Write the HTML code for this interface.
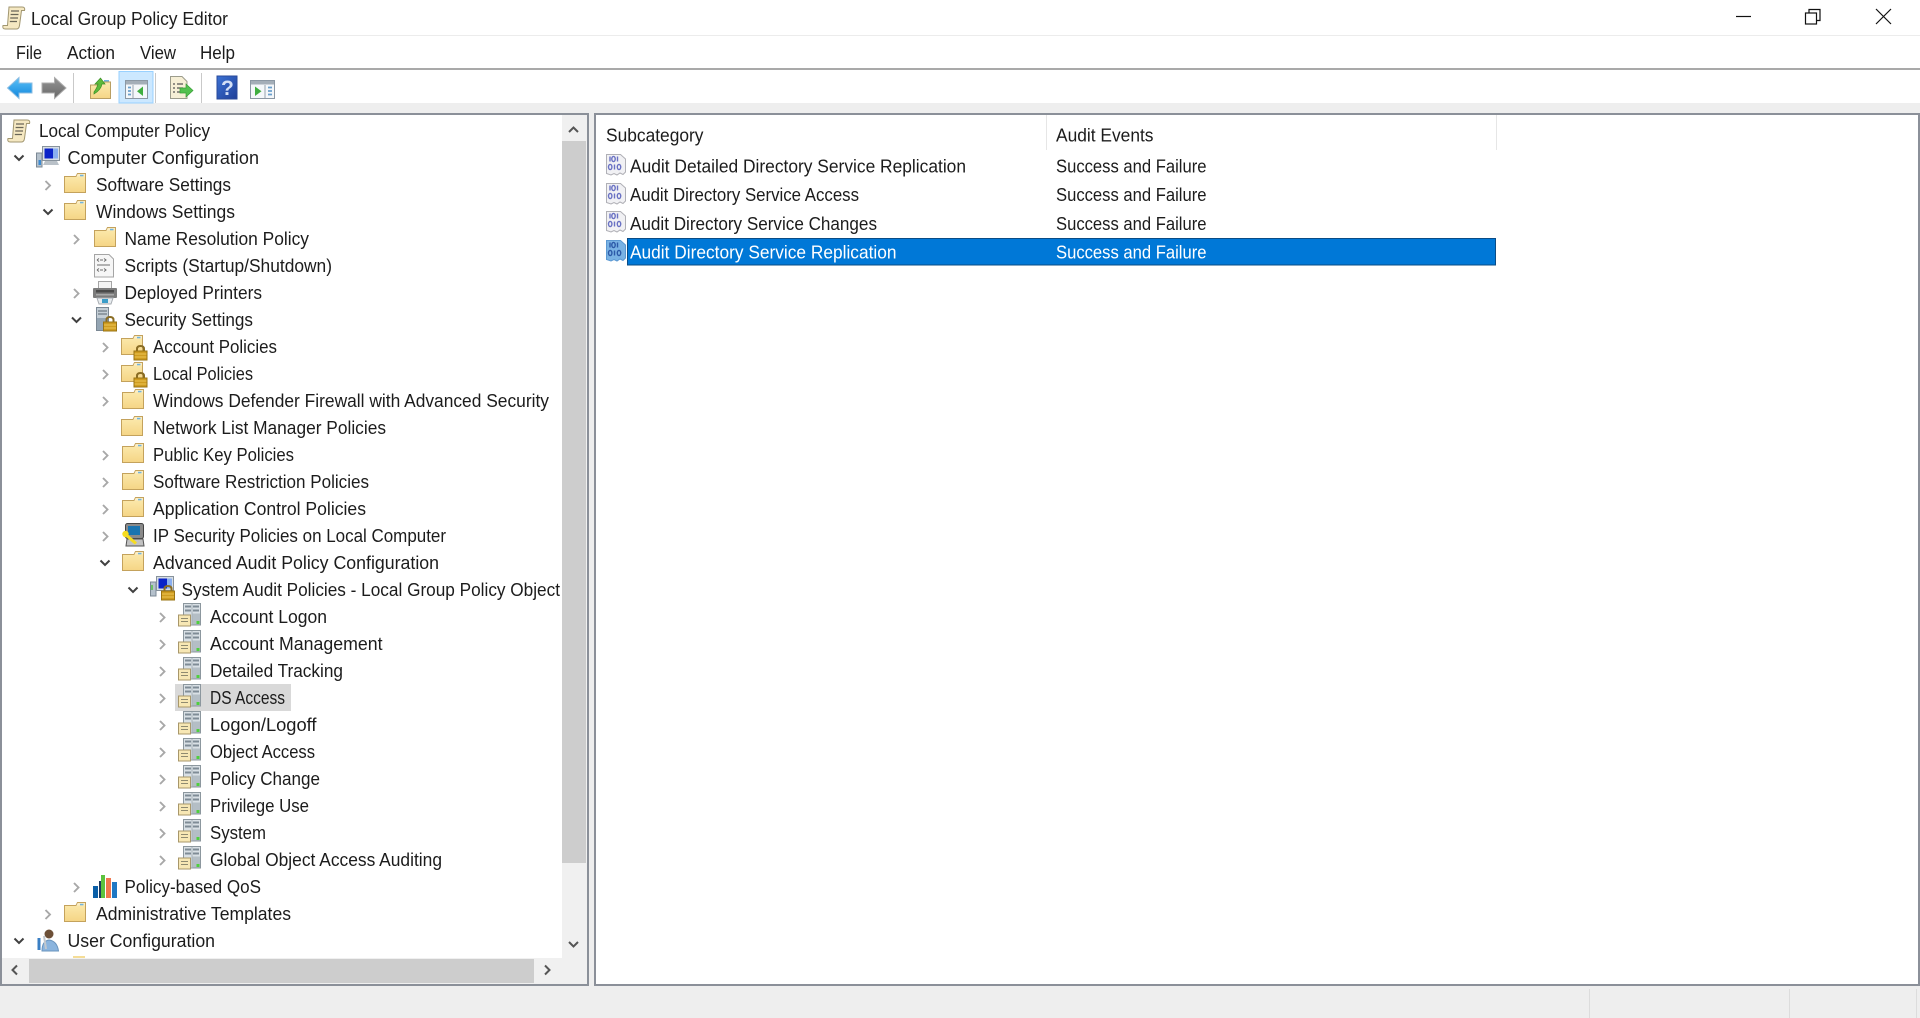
<!DOCTYPE html>
<html lang="en"><head><meta charset="utf-8"><title>Local Group Policy Editor</title>
<style>
html,body{margin:0;padding:0;background:#fff;width:1920px;height:1018px;overflow:hidden}
svg{display:block}
text{font-family:"Liberation Sans",sans-serif;font-size:18px;fill:#1c1c1c}
.soft{filter:blur(.35px)}
</style></head><body>
<svg xmlns="http://www.w3.org/2000/svg" width="1920" height="1018" viewBox="0 0 1920 1018">
<defs>
<linearGradient id="fg" x1="0" y1="0" x2="0" y2="1"><stop offset="0" stop-color="#fcebb0"/><stop offset="1" stop-color="#f5d585"/></linearGradient>
<linearGradient id="bl" x1="0" y1="0" x2="0" y2="1"><stop offset="0" stop-color="#5cc2f7"/><stop offset="1" stop-color="#0f84dc"/></linearGradient>
<linearGradient id="gr" x1="0" y1="0" x2="0" y2="1"><stop offset="0" stop-color="#959595"/><stop offset="1" stop-color="#686868"/></linearGradient>
<linearGradient id="hp" x1="0" y1="0" x2="1" y2="1"><stop offset="0" stop-color="#3c72d4"/><stop offset="1" stop-color="#1f3f98"/></linearGradient>
<symbol id="folder" width="24" height="22" viewBox="0 0 24 22" overflow="visible">
<path d="M.5 3.500H12L13.500 .5H21.500V19.500H.5Z" fill="url(#fg)" stroke="#c4a25c"/>
<path d="M13.700 1H21V3.500H12.500Z" fill="#fbeec6"/><rect x="16" y="1.800" width="3.500" height="1.500" fill="#6fb4e0"/>
</symbol>
<symbol id="lock" width="15" height="15" viewBox="0 0 15 15" overflow="visible">
<path d="M3.500 6V3.500Q3.500 .5 7 .5T10.500 3.500V6" fill="none" stroke="#8a6d24" stroke-width="2"/>
<rect x=".5" y="5.500" width="13" height="9" fill="#cf9c20" stroke="#9a7414"/><path d="M1 8.500H13M1 11.500H13" stroke="#edc655"/>
</symbol>
<symbol id="server" width="24" height="24" viewBox="0 0 24 24" overflow="visible">
<rect x="5.500" y=".5" width="17" height="21.500" fill="#d9e0e5" stroke="#8c979e"/>
<path d="M7 3.500H13M15 3.500H21M7 7.500H13M15 7.500H21" stroke="#7f8c96" stroke-width="2"/><path d="M14 1V22" stroke="#a8b2b9"/>
<rect x="14.500" y="10.500" width="7.500" height="11" fill="#b4bec5"/>
<rect x=".5" y="12" width="12" height="11" fill="#f7e7b4" stroke="#a8976a"/><path d="M3 15.500H10M3 18.500H10" stroke="#8f8a70"/>
<rect x="18.500" y="18" width="3" height="3" fill="#4fcf3e"/>
</symbol>
<symbol id="scroll" width="24" height="24" viewBox="0 0 24 24" overflow="visible">
<path d="M7 1H20Q23.500 1 22.500 4.500H19.500L17.500 19.500Q17 23.500 13.500 23H3.500Q0 23 1 19.500H5.500Z" fill="#f5e8c2" stroke="#a19670"/>
<path d="M9 5H17M8.600 8.500H16.500M8.200 12H16M7.800 15.500H15" stroke="#6a6658" stroke-width="1.300"/>
</symbol>
<symbol id="bin" width="21" height="22" viewBox="0 0 21 22" overflow="visible">
<path d="M.5 .5H14.500L19.500 5V18L17 20.500L14 19L11 21L8 19.500L5 21L.5 19.500Z" fill="#f1f1f4" stroke="#b0b0b6"/>
<g fill="none" stroke="#6a72c4" stroke-width="1.400"><ellipse cx="7.500" cy="5" rx="1.700" ry="2.600"/><path d="M4 2.500V7.500M11.500 2.500V7.500"/><ellipse cx="4.200" cy="13" rx="1.700" ry="2.600"/><path d="M8.500 10.500V15.500"/><ellipse cx="13" cy="13" rx="1.700" ry="2.600"/></g>
</symbol>
<symbol id="binsel" width="21" height="22" viewBox="0 0 21 22" overflow="visible">
<path d="M.5 .5H14.500L19.500 5V18L17 20.500L14 19L11 21L8 19.500L5 21L.5 19.500Z" fill="#79b2e4" stroke="#5b98d2"/>
<g fill="none" stroke="#2c5aa8" stroke-width="1.400"><ellipse cx="7.500" cy="5" rx="1.700" ry="2.600"/><path d="M4 2.500V7.500M11.500 2.500V7.500"/><ellipse cx="4.200" cy="13" rx="1.700" ry="2.600"/><path d="M8.500 10.500V15.500"/><ellipse cx="13" cy="13" rx="1.700" ry="2.600"/></g>
</symbol>
</defs>

<!-- window chrome -->
<rect width="1920" height="1018" fill="#fff"/>
<rect x="0" y="35" width="1920" height="1" fill="#ececec"/>
<rect x="0" y="68" width="1920" height="2" fill="#a9a9a9"/>
<rect x="0" y="103" width="1920" height="10" fill="#eeeeee"/>
<rect x="0" y="113" width="1920" height="905" fill="#eeeeee"/>

<!-- left pane -->
<rect x="1" y="114" width="587" height="871" fill="#fff" stroke="#8b9099" stroke-width="2"/>
<rect x="562" y="115" width="25" height="843" fill="#f0f0f0"/>
<rect x="562" y="141" width="24" height="722" fill="#cdcdcd"/>
<rect x="2" y="958" width="585" height="26" fill="#f0f0f0"/>
<rect x="29" y="959" width="505" height="24" fill="#cdcdcd"/>
<g fill="none" stroke="#555" stroke-width="2">
<path d="M569 132L573.500 127.500L578 132"/>
<path d="M569 942L573.500 946.500L578 942"/>
<path d="M17 965.500L12.500 970L17 974.500"/>
<path d="M545 965.500L549.500 970L545 974.500"/>
</g>

<!-- right pane -->
<rect x="595" y="114" width="1324" height="871" fill="#fff" stroke="#8b9099" stroke-width="2"/>
<rect x="1046" y="115" width="1" height="35" fill="#e6e6e6"/>
<rect x="1496" y="115" width="1" height="35" fill="#e6e6e6"/>
<rect x="627" y="238" width="869" height="27.500" fill="#0078d7"/>
<rect x="627.500" y="238.500" width="868" height="26.500" fill="none" stroke="#0a4c86"/>

<!-- status bar -->
<rect x="1589" y="989" width="1" height="29" fill="#dcdcdc"/>
<rect x="1789" y="989" width="1" height="29" fill="#dcdcdc"/>
<rect x="1916" y="989" width="1" height="29" fill="#dcdcdc"/>

<!-- window controls -->
<g fill="none" stroke="#111" stroke-width="1.200">
<path d="M1736 16.500H1751"/>
<rect x="1805.500" y="13" width="11" height="11"/>
<path d="M1809 13V9.500H1820V20.500H1816.500"/>
<path d="M1876 9L1891 24M1891 9L1876 24"/>
</g>

<rect x="175" y="684" width="116" height="27" fill="#d9d9d9"/>

<g class="soft">
<!-- title and menu -->
<use href="#scroll" x="2" y="6"/>
<text x="31" y="25" textLength="197" lengthAdjust="spacingAndGlyphs">Local Group Policy Editor</text>
<text x="16" y="59" textLength="26" lengthAdjust="spacingAndGlyphs">File</text>
<text x="67" y="59" textLength="48" lengthAdjust="spacingAndGlyphs">Action</text>
<text x="140" y="59" textLength="36" lengthAdjust="spacingAndGlyphs">View</text>
<text x="200" y="59" textLength="35" lengthAdjust="spacingAndGlyphs">Help</text>

<!-- toolbar -->
<path d="M7.500 88L19 77.500V83H32V93H19V98.500Z" fill="url(#bl)" stroke="#8cbde2"/>
<path d="M66 88L54.500 77.500V83H42V93H54.500V98.500Z" fill="url(#gr)" stroke="#acacac"/>
<rect x="73" y="73" width="1" height="30" fill="#c9c9c9"/>
<path d="M90.500 85H97L99 82H110.500V98.500H90.500Z" fill="url(#fg)" stroke="#b99f63"/>
<path d="M94 92Q97 88 98 84H95L100.500 78L105 84H102Q101 90 94 94Z" fill="#5cba3c" stroke="#3c8f26" stroke-width=".7"/>
<rect x="104" y="80" width="5" height="1.500" fill="#6fb4e0"/>
<rect x="119" y="71.500" width="34" height="31.500" fill="#cce8ff" stroke="#99d1ff"/>
<rect x="125.500" y="80.500" width="22" height="18" fill="#f4f7fa" stroke="#8b97a3"/>
<rect x="126" y="81" width="21" height="3.500" fill="#a4aeb8"/>
<path d="M133 85V98" stroke="#98a3ae"/>
<path d="M128 87.500H131M128 91H131M128 94.500H131" stroke="#6a9fcc" stroke-width="1.800"/>
<path d="M143 86.500V96L137 91.200Z" fill="#3fae3f"/>
<rect x="155" y="73" width="1" height="30" fill="#c9c9c9"/>
<path d="M170.500 76.500H182L187 81.500V98.500H170.500Z" fill="#f6efd6" stroke="#9c9c8c"/>
<path d="M173 84H175M177 84H183M173 88H175M177 88H183M173 92H175M177 92H183" stroke="#555" stroke-width="1.300"/>
<path d="M180 88H186V84L193 90.500L186 97V93H180Z" fill="#53c14f" stroke="#3a9d38" stroke-width=".7"/>
<rect x="201" y="73" width="1" height="30" fill="#c9c9c9"/>
<rect x="217" y="76" width="20" height="23" fill="url(#hp)" stroke="#2a4a9a"/>
<text x="221" y="95" style="font-size:21px;font-weight:bold;fill:#d3dff6">?</text>
<rect x="250.500" y="80.500" width="24" height="18" fill="#f4f7fa" stroke="#8b97a3"/>
<rect x="251" y="81" width="23" height="3.500" fill="#a4aeb8"/>
<path d="M265 85V98" stroke="#98a3ae"/>
<path d="M268 87.500H272M268 91H272M268 94.500H272" stroke="#6a9fcc" stroke-width="1.800"/>
<path d="M255 86.500V96L261.500 91.200Z" fill="#3fae3f"/>

<!-- chevrons -->
<g fill="none" stroke="#a8a8a8" stroke-width="1.900">
<path d="M45.500 181L50 185.500L45.500 190"/>
<path d="M74 235L78.500 239.500L74 244"/>
<path d="M74 289L78.500 293.500L74 298"/>
<path d="M103 343L107.500 347.500L103 352"/>
<path d="M103 370L107.500 374.500L103 379"/>
<path d="M103 397L107.500 401.500L103 406"/>
<path d="M103 451L107.500 455.500L103 460"/>
<path d="M103 478L107.500 482.500L103 487"/>
<path d="M103 505L107.500 509.500L103 514"/>
<path d="M103 532L107.500 536.500L103 541"/>
<path d="M160 613L164.500 617.500L160 622"/>
<path d="M160 640L164.500 644.500L160 649"/>
<path d="M160 667L164.500 671.500L160 676"/>
<path d="M160 694L164.500 698.500L160 703"/>
<path d="M160 721L164.500 725.500L160 730"/>
<path d="M160 748L164.500 752.500L160 757"/>
<path d="M160 775L164.500 779.500L160 784"/>
<path d="M160 802L164.500 806.500L160 811"/>
<path d="M160 829L164.500 833.500L160 838"/>
<path d="M160 856L164.500 860.500L160 865"/>
<path d="M74 883L78.500 887.500L74 892"/>
<path d="M45.500 910L50 914.500L45.500 919"/>
</g>
<g fill="none" stroke="#404040" stroke-width="2">
<path d="M14.500 155.500L19 160L23.500 155.500"/>
<path d="M43.500 209.500L48 214L52.500 209.500"/>
<path d="M72 317.500L76.500 322L81 317.500"/>
<path d="M100.500 560.500L105 565L109.500 560.500"/>
<path d="M128.500 587.500L133 592L137.500 587.500"/>
<path d="M14.500 938.500L19 943L23.500 938.500"/>
</g>

<!-- tree icons -->
<use href="#scroll" x="7" y="119"/>
<!-- computer -->
<path d="M36.500 153H42V167H36.500Z" fill="#b5c1cc" stroke="#7b8894"/>
<rect x="42.500" y="146.500" width="17" height="14" fill="#d8dee3" stroke="#87929c"/>
<rect x="44.500" y="148.500" width="9" height="10" fill="#0a22c8"/><rect x="53" y="148.500" width="5" height="10" fill="#89aef0"/>
<path d="M45 161H57L59 165H43Z" fill="#b9c1c8"/>
<rect x="38.500" y="160" width="2.500" height="5" fill="#3b8ad2"/>
<use href="#folder" x="64" y="173"/>
<use href="#folder" x="64" y="200"/>
<use href="#folder" x="94" y="227"/>
<!-- script -->
<path d="M94.500 254.500H109L113.500 259V277H94.500Z" fill="#f6f6f6" stroke="#a5a5a5"/>
<path d="M97 260L99 258.500M97 260L99 261.500M104 258.500L106 260L104 261.500M100 260H103M97 270L99 268.500M97 270L99 271.500M104 268.500L106 270L104 271.500M100 270H103M97 265H110" stroke="#6c6c6c" fill="none"/>
<!-- printer -->
<rect x="98.500" y="281.500" width="13" height="8" fill="#f4f4f4" stroke="#a5a5a5"/>
<rect x="93" y="288" width="24" height="10" rx="1" fill="#7c7c7c"/><rect x="96" y="290" width="18" height="2.500" fill="#4a4a4a"/><rect x="96" y="294" width="18" height="1.500" fill="#a8a8a8"/>
<path d="M97 298H113L111 304H99Z" fill="#e8ecef" stroke="#a8adb2"/><rect x="102" y="299" width="6" height="4" fill="#3b9dc9"/>
<!-- security -->
<rect x="96.500" y="307.500" width="12" height="23" fill="#c4ced6" stroke="#7b8894"/><path d="M98 311H107M98 314H107" stroke="#5a6570"/>
<rect x="97" y="318" width="11" height="12" fill="#94a5b3"/>
<use href="#lock" x="103" y="316.500"/>
<use href="#folder" x="121" y="335"/><use href="#lock" x="133.500" y="345.500"/>
<use href="#folder" x="121" y="362"/><use href="#lock" x="133.500" y="372.500"/>
<use href="#folder" x="122" y="389"/>
<use href="#folder" x="121" y="416"/>
<use href="#folder" x="122" y="443"/>
<use href="#folder" x="122" y="470"/>
<use href="#folder" x="122" y="497"/>
<!-- ip security -->
<rect x="125.500" y="523.500" width="18" height="15" rx="2" fill="#8a8a8a" stroke="#444"/><rect x="128" y="526" width="12" height="9" fill="#1a74b0"/>
<path d="M127 539H143L144 546H126Z" fill="#c2c2c2" stroke="#555"/>
<path d="M125 534L136 543.500" stroke="#f6dc20" stroke-width="3"/><circle cx="125.500" cy="534" r="3.200" fill="#f6dc20"/>
<use href="#folder" x="122" y="551"/>
<!-- system audit -->
<path d="M150.500 582H156V596H150.500Z" fill="#b5c1cc" stroke="#7b8894"/><path d="M152 585V590" stroke="#55c044" stroke-width="1.500"/>
<rect x="156.500" y="576.500" width="17" height="14" fill="#d8dee3" stroke="#87929c"/>
<rect x="158.500" y="578.500" width="9" height="10" fill="#0a22c8"/><rect x="167" y="578.500" width="5" height="10" fill="#89aef0"/>
<use href="#lock" x="161" y="585.500"/>
<use href="#server" x="178" y="603"/>
<use href="#server" x="178" y="630"/>
<use href="#server" x="178" y="657"/>
<use href="#server" x="178" y="684"/>
<use href="#server" x="178" y="711"/>
<use href="#server" x="178" y="738"/>
<use href="#server" x="178" y="765"/>
<use href="#server" x="178" y="792"/>
<use href="#server" x="178" y="819"/>
<use href="#server" x="178" y="846"/>
<!-- qos -->
<rect x="93" y="886" width="5" height="12" fill="#0a5fa8"/><rect x="99" y="881" width="4" height="17" fill="#1f3a60"/>
<rect x="101" y="875" width="4" height="23" fill="#5cc23e"/><rect x="106" y="878" width="5" height="20" fill="#f0784e"/>
<rect x="112" y="882" width="5" height="16" fill="#1e78c4"/>
<use href="#folder" x="64" y="902"/>
<!-- user -->
<circle cx="49" cy="934" r="4.500" fill="#6d5037"/>
<path d="M42 951Q42 941 49 940Q57 941 58.500 951Z" fill="#8ab4de" stroke="#6a94bd"/>
<path d="M39 938V950" stroke="#3a7fc4" stroke-width="3"/><path d="M44 936L46 949" stroke="#c2c8ce" stroke-width="2"/>
<rect x="73" y="956" width="12" height="2" fill="#f5dd97"/>

<!-- list icons -->
<use href="#bin" x="606" y="154"/>
<use href="#bin" x="606" y="183"/>
<use href="#bin" x="606" y="211"/>
<use href="#binsel" x="606" y="240"/>

<!-- tree labels -->
<g transform="translate(0,-.6)">
<text x="39" y="137.500" textLength="171" lengthAdjust="spacingAndGlyphs">Local Computer Policy</text>
<text x="67.500" y="164.500" textLength="191.500" lengthAdjust="spacingAndGlyphs">Computer Configuration</text>
<text x="96" y="191.500" textLength="135" lengthAdjust="spacingAndGlyphs">Software Settings</text>
<text x="96" y="218.500" textLength="139" lengthAdjust="spacingAndGlyphs">Windows Settings</text>
<text x="124.500" y="245.500" textLength="184.500" lengthAdjust="spacingAndGlyphs">Name Resolution Policy</text>
<text x="124.500" y="272.500" textLength="207.500" lengthAdjust="spacingAndGlyphs">Scripts (Startup/Shutdown)</text>
<text x="124.500" y="299.500" textLength="137.500" lengthAdjust="spacingAndGlyphs">Deployed Printers</text>
<text x="124.500" y="326.500" textLength="128.500" lengthAdjust="spacingAndGlyphs">Security Settings</text>
<text x="153" y="353.500" textLength="124" lengthAdjust="spacingAndGlyphs">Account Policies</text>
<text x="153" y="380.500" textLength="100" lengthAdjust="spacingAndGlyphs">Local Policies</text>
<text x="153" y="407.500" textLength="396" lengthAdjust="spacingAndGlyphs">Windows Defender Firewall with Advanced Security</text>
<text x="153" y="434.500" textLength="233" lengthAdjust="spacingAndGlyphs">Network List Manager Policies</text>
<text x="153" y="461.500" textLength="141" lengthAdjust="spacingAndGlyphs">Public Key Policies</text>
<text x="153" y="488.500" textLength="216" lengthAdjust="spacingAndGlyphs">Software Restriction Policies</text>
<text x="153" y="515.500" textLength="213" lengthAdjust="spacingAndGlyphs">Application Control Policies</text>
<text x="153" y="542.500" textLength="293" lengthAdjust="spacingAndGlyphs">IP Security Policies on Local Computer</text>
<text x="153" y="569.500" textLength="286" lengthAdjust="spacingAndGlyphs">Advanced Audit Policy Configuration</text>
<text x="181.500" y="596.500" textLength="378.500" lengthAdjust="spacingAndGlyphs">System Audit Policies - Local Group Policy Object</text>
<text x="210" y="623.500" textLength="117" lengthAdjust="spacingAndGlyphs">Account Logon</text>
<text x="210" y="650.500" textLength="172.500" lengthAdjust="spacingAndGlyphs">Account Management</text>
<text x="210" y="677.500" textLength="133" lengthAdjust="spacingAndGlyphs">Detailed Tracking</text>
<text x="210" y="704.500" textLength="75" lengthAdjust="spacingAndGlyphs">DS Access</text>
<text x="210" y="731.500" textLength="106.500" lengthAdjust="spacingAndGlyphs">Logon/Logoff</text>
<text x="210" y="758.500" textLength="105" lengthAdjust="spacingAndGlyphs">Object Access</text>
<text x="210" y="785.500" textLength="110" lengthAdjust="spacingAndGlyphs">Policy Change</text>
<text x="210" y="812.500" textLength="99" lengthAdjust="spacingAndGlyphs">Privilege Use</text>
<text x="210" y="839.500" textLength="56" lengthAdjust="spacingAndGlyphs">System</text>
<text x="210" y="866.500" textLength="232" lengthAdjust="spacingAndGlyphs">Global Object Access Auditing</text>
<text x="124.500" y="893.500" textLength="136.500" lengthAdjust="spacingAndGlyphs">Policy-based QoS</text>
<text x="96" y="920.500" textLength="195" lengthAdjust="spacingAndGlyphs">Administrative Templates</text>
<text x="67.500" y="947.500" textLength="147.500" lengthAdjust="spacingAndGlyphs">User Configuration</text>
</g>

<!-- list labels -->
<text x="606" y="141.500" textLength="97.500" lengthAdjust="spacingAndGlyphs">Subcategory</text>
<text x="1056" y="141.500" textLength="97.500" lengthAdjust="spacingAndGlyphs">Audit Events</text>
<text x="630" y="172.500" textLength="336" lengthAdjust="spacingAndGlyphs">Audit Detailed Directory Service Replication</text>
<text x="1056" y="172.500" textLength="150.500" lengthAdjust="spacingAndGlyphs">Success and Failure</text>
<text x="630" y="201" textLength="229" lengthAdjust="spacingAndGlyphs">Audit Directory Service Access</text>
<text x="1056" y="201" textLength="150.500" lengthAdjust="spacingAndGlyphs">Success and Failure</text>
<text x="630" y="230" textLength="247" lengthAdjust="spacingAndGlyphs">Audit Directory Service Changes</text>
<text x="1056" y="230" textLength="150.500" lengthAdjust="spacingAndGlyphs">Success and Failure</text>
<text x="630" y="258.500" textLength="266.500" lengthAdjust="spacingAndGlyphs" style="fill:#fff">Audit Directory Service Replication</text>
<text x="1056" y="258.500" textLength="150.500" lengthAdjust="spacingAndGlyphs" style="fill:#fff">Success and Failure</text>
</g>
</svg>
</body></html>
